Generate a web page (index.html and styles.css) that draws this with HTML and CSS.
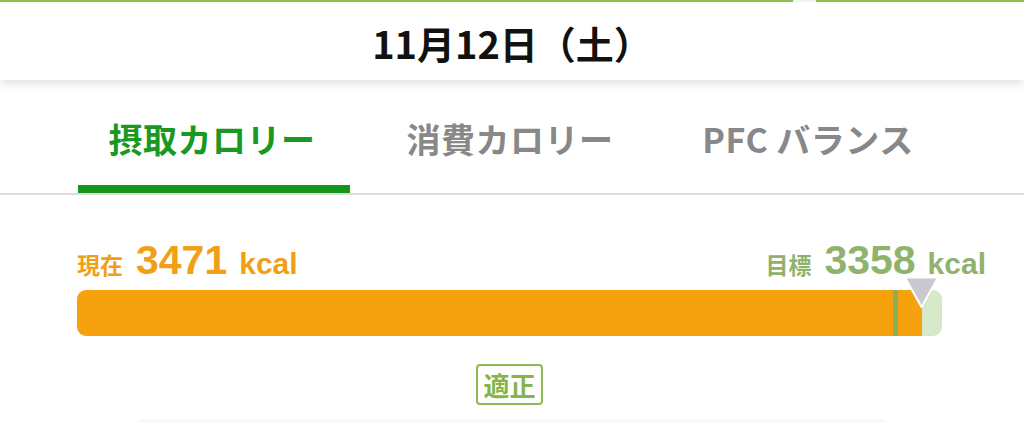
FILE: index.html
```html
<!DOCTYPE html>
<html lang="ja">
<head>
<meta charset="utf-8">
<link rel="stylesheet" href="styles.css">
</head>
<body>
<div class="page">
  <header class="header">
    <div class="topline"><span class="seg-a"></span><span class="gap"></span><span class="seg-b"></span></div>
    <div class="date">11月12日（土）</div>
  </header>
  <nav class="tabs">
    <div class="tab active"><span class="tab-label">摂取カロリー</span><span class="underline"></span></div>
    <div class="tab"><span class="tab-label">消費カロリー</span></div>
    <div class="tab"><span class="tab-label"><span class="pfc">PFC</span>バランス</span></div>
  </nav>
  <section class="summary">
    <div class="labels">
      <div class="current"><span class="lbl">現在</span><span class="num">3471</span><span class="unit">kcal</span></div>
      <div class="target"><span class="lbl">目標</span><span class="num">3358</span><span class="unit">kcal</span></div>
    </div>
    <div class="bar">
      <span class="fill-a"></span><span class="mark"></span><span class="fill-b"></span><span class="rest"></span>
      <svg class="pointer" width="37" height="34" viewBox="0 0 37 34"><polygon points="2,1.5 35,1.5 18.5,31" fill="#c9c9cf" stroke="#ffffff" stroke-width="2" stroke-linejoin="round"/></svg>
    </div>
    <div class="badge-row"><span class="badge">適正</span></div>
  </section>
  <div class="card-edge"></div>
</div>
</body>
</html>
```

FILE: styles.css
```css
* { box-sizing: border-box; }
html, body { margin: 0; padding: 0; background: #ffffff; }
body {
  font-family: "Liberation Sans", "Noto Sans CJK JP", sans-serif;
  width: 1024px;
  height: 425px;
  overflow: hidden;
}
.page { width: 1024px; }

.header {
  position: relative;
  height: 80px;
  background: #ffffff;
  display: flex;
  flex-direction: column;
  box-shadow: 0 3px 10px rgba(0,0,0,0.13);
  z-index: 2;
}
.topline { display: flex; height: 2px; }
.seg-a { width: 793px; background: #8cbf4e; }
.gap { width: 23px; background: #f4f4f4; }
.seg-b { flex: 1; background: #8cbf4e; }
.date {
  flex: 1;
  display: flex;
  align-items: center;
  justify-content: center;
  font-family: "Noto Sans CJK JP", sans-serif;
  font-weight: 700;
  font-size: 38px;
  color: #111111;
  padding-left: 0;
  padding-top: 2px;
}

.tabs {
  display: grid;
  grid-template-columns: 298px 298px 298px;
  padding: 0 63px;
  border-bottom: 2px solid #dcdcdc;
}
.tab {
  display: flex;
  flex-direction: column;
  align-items: center;
  padding-top: 40px;
  height: 113px;
}
.tab-label {
  font-family: "Noto Sans CJK JP", sans-serif;
  font-weight: 700;
  font-size: 34px;
  line-height: 38px;
  color: #888888;
  letter-spacing: 0.5px;
}
.pfc { margin-right: 8px; }
.tab.active .tab-label { color: #1a9922; }
.underline {
  display: block;
  margin-top: 27px;
  width: 272px;
  height: 8px;
  background: #159619;
  align-self: flex-start;
  margin-left: 15px;
}

.summary { padding: 0 38px 0 77px; }
.labels {
  display: flex;
  justify-content: space-between;
  align-items: baseline;
  padding-top: 45px;
  line-height: 40px;
}
.current, .target { display: flex; align-items: baseline; }
.current { color: #f0a016; }
.target { color: #8fb26c; }
.lbl {
  font-family: "Noto Sans CJK JP", sans-serif;
  font-weight: 700;
  font-size: 23px;
  margin-right: 13px;
}
.num {
  font-weight: 700;
  font-size: 41px;
  margin-right: 12px;
}
.unit {
  font-weight: 700;
  font-size: 30px;
}

.bar {
  position: relative;
  margin-top: 6px;
  width: 865px;
  height: 46px;
  display: flex;
  border-radius: 9px;
}
.fill-a { width: 816px; background: #f5a20e; border-radius: 9px 0 0 9px; }
.mark { width: 5px; background: #8fae5a; }
.fill-b { width: 24px; background: #f5a20e; }
.rest { flex: 1; background: #d5e9c9; border-radius: 0 9px 9px 0; }
.pointer {
  position: absolute;
  left: 826px;
  top: -14px;
}

.badge-row {
  width: 865px;
  display: flex;
  justify-content: center;
  margin-top: 28px;
}
.badge {
  display: inline-block;
  border: 2px solid #8bbb52;
  border-radius: 4px;
  padding: 0 5px;
  font-family: "Noto Sans CJK JP", sans-serif;
  font-weight: 700;
  font-size: 26px;
  line-height: 37px;
  color: #84b44a;
}

.card-edge {
  margin: 16px 140px 0 140px;
  height: 6px;
  border-top: 1px solid #f4f4f4;
  box-shadow: 0 -1px 3px rgba(0,0,0,0.03);
}
```
